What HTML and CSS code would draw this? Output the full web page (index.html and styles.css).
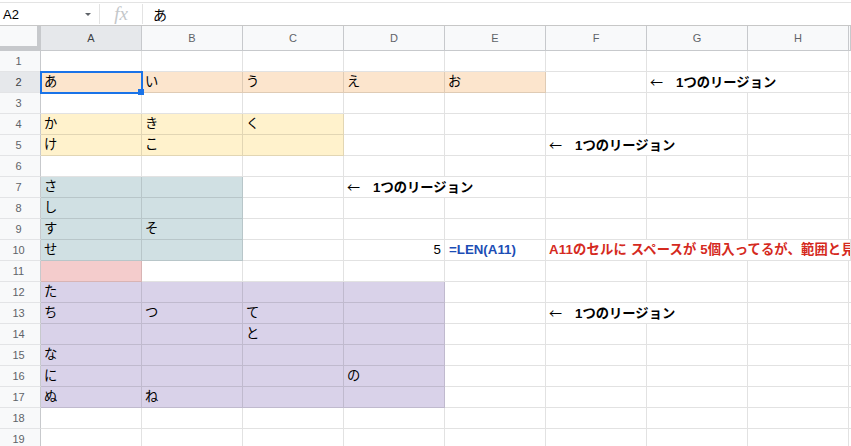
FILE: index.html
```html
<!DOCTYPE html>
<html lang="ja">
<head>
  <meta charset="UTF-8" />
  <title>リージョン - スプレッドシート</title>
  <link rel="stylesheet" href="styles.css">
</head>
<body>
  <div class="formula-bar">
    <div class="name-box"><span>A2</span><span class="caret"></span></div>
    <div class="fx">fx</div>
    <div class="value">あ</div>
  </div>

  <div class="sheet">
    <div class="row head">
      <div class="corner"></div>
      <div class="col sel">A</div>
      <div class="col">B</div>
      <div class="col">C</div>
      <div class="col">D</div>
      <div class="col">E</div>
      <div class="col">F</div>
      <div class="col">G</div>
      <div class="col">H</div>
      <div class="col"></div>
    </div>

    <div class="row">
      <div class="num">1</div>
      <div class="cell"></div><div class="cell"></div><div class="cell"></div><div class="cell"></div>
      <div class="cell"></div><div class="cell"></div><div class="cell"></div><div class="cell"></div><div class="cell"></div>
    </div>

    <div class="row">
      <div class="num sel">2</div>
      <div class="cell peach active">あ<div class="selection"><div class="handle"></div></div></div>
      <div class="cell peach">い</div>
      <div class="cell peach">う</div>
      <div class="cell peach">え</div>
      <div class="cell peach">お</div>
      <div class="cell"></div>
      <div class="cell note span2"><span class="arrow">←　</span>1つのリージョン</div>
      <div class="cell"></div>
    </div>

    <div class="row">
      <div class="num">3</div>
      <div class="cell"></div><div class="cell"></div><div class="cell"></div><div class="cell"></div>
      <div class="cell"></div><div class="cell"></div><div class="cell"></div><div class="cell"></div><div class="cell"></div>
    </div>

    <div class="row">
      <div class="num">4</div>
      <div class="cell yellow">か</div>
      <div class="cell yellow">き</div>
      <div class="cell yellow">く</div>
      <div class="cell"></div><div class="cell"></div><div class="cell"></div><div class="cell"></div><div class="cell"></div><div class="cell"></div>
    </div>

    <div class="row">
      <div class="num">5</div>
      <div class="cell yellow">け</div>
      <div class="cell yellow">こ</div>
      <div class="cell yellow"></div>
      <div class="cell"></div><div class="cell"></div>
      <div class="cell note span2"><span class="arrow">←　</span>1つのリージョン</div>
      <div class="cell"></div><div class="cell"></div>
    </div>

    <div class="row">
      <div class="num">6</div>
      <div class="cell"></div><div class="cell"></div><div class="cell"></div><div class="cell"></div>
      <div class="cell"></div><div class="cell"></div><div class="cell"></div><div class="cell"></div><div class="cell"></div>
    </div>

    <div class="row">
      <div class="num">7</div>
      <div class="cell teal">さ</div>
      <div class="cell teal"></div>
      <div class="cell"></div>
      <div class="cell note span2"><span class="arrow">←　</span>1つのリージョン</div>
      <div class="cell"></div><div class="cell"></div><div class="cell"></div><div class="cell"></div>
    </div>

    <div class="row">
      <div class="num">8</div>
      <div class="cell teal">し</div>
      <div class="cell teal"></div>
      <div class="cell"></div><div class="cell"></div><div class="cell"></div><div class="cell"></div><div class="cell"></div><div class="cell"></div><div class="cell"></div>
    </div>

    <div class="row">
      <div class="num">9</div>
      <div class="cell teal">す</div>
      <div class="cell teal">そ</div>
      <div class="cell"></div><div class="cell"></div><div class="cell"></div><div class="cell"></div><div class="cell"></div><div class="cell"></div><div class="cell"></div>
    </div>

    <div class="row">
      <div class="num">10</div>
      <div class="cell teal">せ</div>
      <div class="cell teal"></div>
      <div class="cell"></div>
      <div class="cell number">5</div>
      <div class="cell formula">=LEN(A11)</div>
      <div class="cell warn span4">A11のセルに スペースが 5個入ってるが、範囲と見</div>
    </div>

    <div class="row">
      <div class="num">11</div>
      <div class="cell pink"></div>
      <div class="cell"></div><div class="cell"></div><div class="cell"></div><div class="cell"></div><div class="cell"></div><div class="cell"></div><div class="cell"></div><div class="cell"></div>
    </div>

    <div class="row">
      <div class="num">12</div>
      <div class="cell lilac">た</div>
      <div class="cell lilac"></div>
      <div class="cell lilac"></div>
      <div class="cell lilac"></div>
      <div class="cell"></div><div class="cell"></div><div class="cell"></div><div class="cell"></div><div class="cell"></div>
    </div>

    <div class="row">
      <div class="num">13</div>
      <div class="cell lilac">ち</div>
      <div class="cell lilac">つ</div>
      <div class="cell lilac">て</div>
      <div class="cell lilac"></div>
      <div class="cell"></div>
      <div class="cell note span2"><span class="arrow">←　</span>1つのリージョン</div>
      <div class="cell"></div><div class="cell"></div>
    </div>

    <div class="row">
      <div class="num">14</div>
      <div class="cell lilac"></div>
      <div class="cell lilac"></div>
      <div class="cell lilac">と</div>
      <div class="cell lilac"></div>
      <div class="cell"></div><div class="cell"></div><div class="cell"></div><div class="cell"></div><div class="cell"></div>
    </div>

    <div class="row">
      <div class="num">15</div>
      <div class="cell lilac">な</div>
      <div class="cell lilac"></div>
      <div class="cell lilac"></div>
      <div class="cell lilac"></div>
      <div class="cell"></div><div class="cell"></div><div class="cell"></div><div class="cell"></div><div class="cell"></div>
    </div>

    <div class="row">
      <div class="num">16</div>
      <div class="cell lilac">に</div>
      <div class="cell lilac"></div>
      <div class="cell lilac"></div>
      <div class="cell lilac">の</div>
      <div class="cell"></div><div class="cell"></div><div class="cell"></div><div class="cell"></div><div class="cell"></div>
    </div>

    <div class="row">
      <div class="num">17</div>
      <div class="cell lilac">ぬ</div>
      <div class="cell lilac">ね</div>
      <div class="cell lilac"></div>
      <div class="cell lilac"></div>
      <div class="cell"></div><div class="cell"></div><div class="cell"></div><div class="cell"></div><div class="cell"></div>
    </div>

    <div class="row">
      <div class="num">18</div>
      <div class="cell"></div><div class="cell"></div><div class="cell"></div><div class="cell"></div>
      <div class="cell"></div><div class="cell"></div><div class="cell"></div><div class="cell"></div><div class="cell"></div>
    </div>

    <div class="row">
      <div class="num">19</div>
      <div class="cell"></div><div class="cell"></div><div class="cell"></div><div class="cell"></div>
      <div class="cell"></div><div class="cell"></div><div class="cell"></div><div class="cell"></div><div class="cell"></div>
    </div>
  </div>
</body>
</html>
```

FILE: styles.css
```css
*{
  margin: 0;
  padding: 0;
  box-sizing: border-box;
}
html, body{
  height: 100%;
  width: 100%;
}
body{
  font-family: "Liberation Sans", "Noto Sans CJK JP", sans-serif;
  background: #fff;
  color: #000;
  overflow: hidden;
}

/* formula bar */
.formula-bar{
  display: flex;
  align-items: center;
  height: 24px;
  margin-top: 2px;
  border-top: 1px solid #e3e3e3;
  border-bottom: 1px solid #c7c7c7;
}
.name-box{
  width: 100px;
  height: 20px;
  display: flex;
  align-items: center;
  justify-content: space-between;
  padding: 0 8px 0 3px;
  font-size: 13px;
  border-right: 1px solid #e3e3e3;
}
.caret{
  width: 0;
  height: 0;
  border-left: 3.5px solid transparent;
  border-right: 3.5px solid transparent;
  border-top: 3.5px solid #5f6368;
}
.fx{
  width: 43px;
  height: 20px;
  line-height: 20px;
  text-align: center;
  font-family: "Liberation Serif", serif;
  font-style: italic;
  font-size: 19px;
  color: #c4c7ca;
  border-right: 1px solid #e3e3e3;
}
.value{
  padding-left: 10px;
  font-size: 14px;
}

/* grid */
.row{
  display: grid;
  grid-template-columns: 41px repeat(8, 101px) 1fr;
  height: 21px;
}
.row.head{
  height: 25px;
}
.corner{
  background: #f8f9fa;
  border-right: 4px solid #c7c9cc;
  border-bottom: 5px solid #c7c9cc;
}
.col{
  background: #f8f9fa;
  color: #5f6368;
  font-size: 11px;
  line-height: 24px;
  text-align: center;
  border-right: 1px solid #c7c9cc;
  border-bottom: 1px solid #c7c9cc;
}
.num{
  background: #f8f9fa;
  color: #5f6368;
  font-size: 11px;
  line-height: 20px;
  text-align: center;
  padding-right: 3px;
  border-right: 1px solid #c7c9cc;
  border-bottom: 1px solid #e3e4e6;
}
.col.sel, .num.sel{
  background: #e6e8eb;
  color: #3c4043;
}
.cell{
  font-size: 13.3px;
  line-height: 20px;
  padding: 0 3px;
  white-space: nowrap;
  overflow: hidden;
  border-right: 1px solid rgba(0, 0, 0, 0.115);
  border-bottom: 1px solid rgba(0, 0, 0, 0.115);
}
.span2{
  grid-column: span 2;
}
.span4{
  grid-column: span 4;
}

/* fills */
.peach{ background: #fce5cd; }
.yellow{ background: #fff2cc; }
.teal{ background: #d0e0e3; }
.pink{ background: #f4cccc; }
.lilac{ background: #d9d2e9; }

.note{
  font-weight: bold;
}
.arrow{
  font-family: "Noto Sans CJK JP", sans-serif;
  font-weight: normal;
  font-size: 13px;
}
.number{
  text-align: right;
}
.formula{
  color: #1c4db5;
  font-weight: bold;
  padding-left: 4px;
}
.warn{
  color: #d52a1e;
  font-weight: bold;
  letter-spacing: 0.15px;
}

/* active cell */
.active{
  position: relative;
  overflow: visible;
}
.selection{
  position: absolute;
  left: -1px;
  top: -1px;
  right: -2px;
  bottom: -2px;
  border: 2px solid #1a73e8;
}
.handle{
  position: absolute;
  right: -3px;
  bottom: -3px;
  width: 6px;
  height: 6px;
  background: #1a73e8;
}
```
